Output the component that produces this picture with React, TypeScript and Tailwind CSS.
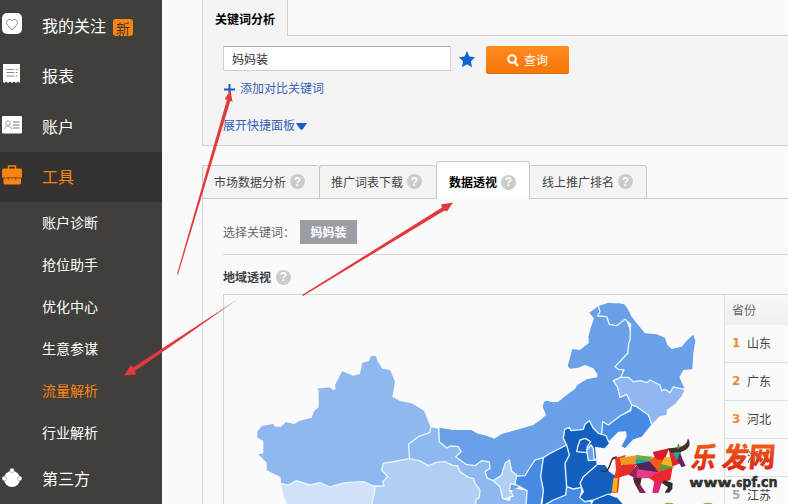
import type { ReactNode } from "react";

const INK = "#404040";

const mainMenu: { label: string; icon: ReactNode; badge?: string; active?: boolean }[] = [
  { label: "我的关注", icon: <HeartIcon />, badge: "新" },
  { label: "报表", icon: <ReportIcon /> },
  { label: "账户", icon: <AccountIcon /> },
  { label: "工具", icon: <ToolIcon />, active: true },
];

const subMenu = ["账户诊断", "抢位助手", "优化中心", "生意参谋", "流量解析", "行业解析"];

const tabs = [
  { label: "市场数据分析", width: "w-[117px]" },
  { label: "推广词表下载", width: "w-[117px]" },
  { label: "数据透视", width: "w-[94px]", active: true },
  { label: "线上推广排名", width: "w-[117px]" },
];

const ranks = ["山东", "广东", "河北", "浙江", "江苏"];

// 省份轮廓
const provinces = [
  {
    name: "内蒙古",
    fill: "#6a9fea",
    d: "M658 413L700 420 755 420 770 430 800 437 823 446 845 432 870 425 940 405 965 387 978 375 968 350 972 335 980 332 1000 337 1015 335 1040 315 1065 297 1072 285 1100 268 1132 262 1132 252 1120 235 1095 225 1075 233 1050 236 1043 228 1057 177 1080 180 1107 158 1105 140 1112 115 1122 85 1108 68 1135 48 1200 40 1240 150 1240 350 1200 378 1165 405 1150 430 1100 480 980 510 915 580 880 600 840 600 790 600 700 520 658 455Z",
  },
  {
    name: "黑龙江",
    fill: "#6a9fea",
    d: "M1135 48L1165 38 1212 42 1222 55 1235 80 1260 112 1275 130 1310 133 1335 143 1342 165 1355 177 1385 170 1405 147 1420 134 1426 152 1420 190 1417 238 1390 240 1378 262 1393 295 1382 300 1360 291 1350 308 1335 298 1325 302 1320 285 1290 270 1280 278 1262 272 1240 275 1225 262 1202 262 1212 240 1195 238 1185 230 1223 190 1226 160 1230 150 1232 102 1215 88 1190 107 1168 103 1160 80 1133 78 1140 65Z",
  },
  {
    name: "吉林",
    fill: "#90b7f1",
    d: "M1180 272L1202 262 1225 262 1240 275 1262 272 1280 278 1290 270 1320 285 1325 302 1335 298 1350 308 1360 291 1393 300 1385 318 1365 342 1340 360 1340 375 1320 378 1295 403 1285 375 1250 350 1235 345 1220 313 1200 322 1193 292Z",
  },
  {
    name: "辽宁",
    fill: "#478ae6",
    d: "M1235 345L1250 350 1285 375 1295 403 1265 440 1240 448 1215 475 1205 468 1220 440 1218 424 1195 425 1165 455 1145 430 1148 395 1165 405 1200 378 1232 362Z",
  },
  {
    name: "新疆",
    fill: "#8fb7f0",
    d: "M112 425L125 408 160 402 165 410 183 410 197 396 222 402 240 392 275 383 283 362 296 352 296 300 290 296 328 292 340 300 347 298 345 286 366 244 400 257 420 252 427 218 447 213 453 198 468 198 472 212 487 236 510 240 525 275 517 320 540 333 575 340 612 362 632 412 630 427 595 440 566 462 568 506 490 520 485 540 503 560 488 575 492 588 462 588 430 575 375 578 330 591 300 578 270 585 230 572 205 585 183 581 182 562 140 540 140 518 115 493 130 490 130 452 112 443Z",
  },
  {
    name: "西藏",
    fill: "#d0e1f9",
    d: "M183 583L205 585 230 572 270 585 300 578 330 591 375 578 430 575 465 592 462 615 453 650 203 650 190 615Z",
  },
  {
    name: "青海",
    fill: "#b1cef5",
    d: "M568 506L598 512 625 527 650 517 675 515 700 527 712 527 720 545 745 562 760 565 765 580 780 600 778 622 768 630 766 650 453 650 465 592 492 588 488 575 503 560 485 540 490 520 530 515Z",
  },
  {
    name: "甘肃",
    fill: "#8fb7f0",
    d: "M632 412L656 416 658 455 680 474 690 468 715 470 723 485 707 500 738 523 765 527 785 512 808 516 810 535 795 545 802 565 820 572 840 590 848 625 870 632 880 595 921 602 918 650 766 650 768 630 778 622 780 600 765 580 760 565 745 562 720 545 712 527 700 527 675 515 650 517 625 527 598 512 568 506 566 462 595 440 630 427Z",
  },
  {
    name: "宁夏",
    fill: "#b1cef5",
    d: "M820 572L845 555 855 520 868 510 875 543 890 555 885 585 872 580 868 600 880 618 850 628 845 600Z",
  },
  {
    name: "陕西",
    fill: "#478ae6",
    d: "M890 558L915 557 925 540 945 510 970 503 962 560 970 600 960 650 918 650 921 602 885 582Z",
  },
  {
    name: "山西",
    fill: "#155fbf",
    d: "M970 503L990 490 1040 465 1048 495 1035 520 1040 592 1037 615 1000 630 965 650 970 600 962 560Z",
  },
  {
    name: "河北",
    fill: "#155fbf",
    d: "M1040 465L1030 445 1034 418 1048 412 1053 422 1090 418 1095 403 1108 392 1120 415 1135 430 1158 437 1168 460 1153 475 1125 470 1130 525 1090 560 1080 580 1085 592 1060 597 1040 590 1035 520 1048 495Z",
  },
  { name: "北京", fill: "#155fbf", d: "M1080 450L1096 445 1112 455 1102 470 1100 488 1070 485 1073 470Z" },
  { name: "天津", fill: "#6a9fea", d: "M1100 480L1113 465 1120 475 1122 505 1128 510 1105 512Z" },
  {
    name: "河南",
    fill: "#478ae6",
    d: "M965 650L1000 630 1037 615 1040 590 1060 597 1085 592 1080 620 1110 635 1125 650Z",
  },
  {
    name: "山东",
    fill: "#155fbf",
    d: "M1090 560L1130 525 1155 525 1168 545 1190 560 1185 600 1165 615 1135 630 1120 630 1095 635 1078 622 1090 605 1080 580Z",
  },
  { name: "江苏", fill: "#155fbf", d: "M1110 650L1120 630 1165 612 1190 622 1215 650Z" },
];

function HeartIcon() {
  return (
    <svg width="20" height="22" viewBox="0 0 20 22">
      <rect width="20" height="21" rx="5" fill="#fff" />
      <path d="M10 17L5.700 12.300C2.500 8.500 7 4 10 7.800 13 4 17.500 8.500 14.300 12.300Z" fill="none" stroke="#777" strokeWidth=".9" />
    </svg>
  );
}

function ReportIcon() {
  return (
    <svg width="20" height="20" viewBox="0 0 20 20">
      <path d="M1 0H18V19L16 17.500 14 19 12 17.500 10 19 8 17.500 6 19 4 17.500 2.500 19 1 18Z" fill="#fff" />
      <path d="M4.500 5.500H12M4.500 8.500H12M4.500 12H12M13.500 5.500H15.500M13.500 8.500H15.500M13.500 12H15.500" stroke="#888" />
    </svg>
  );
}

function AccountIcon() {
  return (
    <svg width="20" height="18" viewBox="0 0 20 18">
      <rect width="20" height="17.500" rx="1" fill="#fff" />
      <circle cx="6" cy="7" r="2.300" fill="none" stroke="#888" strokeWidth=".8" />
      <path d="M2.500 13.500C3 10.500 4.500 10 6 10S9 10.500 9.500 13.500" fill="none" stroke="#888" strokeWidth=".8" />
      <path d="M11 6H17.500M11 9H17.500M11 12H17.500" stroke="#777" />
    </svg>
  );
}

function ToolIcon() {
  return (
    <svg width="20" height="20" viewBox="0 0 20 20">
      <path d="M6.500 4V1H13.500V4" fill="none" stroke="#fb8413" strokeWidth="1.300" />
      <path d="M1.500 3.500H18.500Q20 3.500 20 5V12.500H0V5Q0 3.500 1.500 3.500Z" fill="#fb8413" />
      <path d="M1.500 12.500H19V18Q19 19.500 17.500 19.500H3Q1.500 19.500 1.500 18Z" fill="#fb8413" />
      <path d="M1 13H19.500M6.700 12V15M13.700 12V15" stroke="#7a4a1e" strokeWidth=".8" />
    </svg>
  );
}

function ThirdIcon() {
  return (
    <svg width="20" height="20" viewBox="0 0 20 20">
      <circle cx="10" cy="11" r="8" fill="#fff" />
      <g fill="#fff" stroke="#999" strokeWidth=".6">
        <circle cx="10" cy="2.500" r="2.200" />
        <circle cx="2.300" cy="10.500" r="2.200" />
        <circle cx="17.700" cy="10.500" r="2.200" />
      </g>
    </svg>
  );
}

function Help() {
  return (
    <span className="flex h-[15px] w-[15px] shrink-0 items-center justify-center rounded-full bg-[#cbcbcb] font-['Liberation_Sans'] text-xs font-bold text-white">
      ?
    </span>
  );
}

function Sidebar() {
  return (
    <aside className="flex w-[162px] shrink-0 flex-col bg-[#403f3c] text-base text-white">
      <div className="h-[1px]" />
      {mainMenu.map((m) => (
        <div
          key={m.label}
          className={
            m.active
              ? "flex h-[50px] shrink-0 items-center bg-[#33322f] pb-[2px] pl-[2px] text-[#fb8413]"
              : "flex h-[50.300px] shrink-0 items-center pb-[2px] pl-[2px]"
          }
        >
          <span className="flex w-10 -translate-y-[1px]">{m.icon}</span>
          <span>{m.label}</span>
          {m.badge && (
            <span className="mt-[5px] ml-[7px] flex h-[17px] w-5 items-center justify-center rounded-[3px] bg-[#fb8413] text-sm text-[#40362a]">
              {m.badge}
            </span>
          )}
        </div>
      ))}
      {subMenu.map((s) => (
        <div
          key={s}
          className={
            s === "流量解析"
              ? "flex h-[42px] shrink-0 items-center pb-[2px] pl-[42px] text-sm text-[#fb8413]"
              : "flex h-[42px] shrink-0 items-center pb-[2px] pl-[42px] text-sm"
          }
        >
          {s}
        </div>
      ))}
      <div className="flex h-[50px] shrink-0 items-center pb-[2px] pl-[2px]">
        <span className="flex w-10">
          <ThirdIcon />
        </span>
        <span>第三方</span>
      </div>
    </aside>
  );
}

function SearchPanel() {
  return (
    <section className="flex h-[146px] flex-col border-b border-l border-[#d3d3d3] bg-[#f4f4f4]">
      <div className="flex h-9 shrink-0">
        <div className="w-[85px] border-r border-[#d0d0d0] pt-[10px] pl-3 text-xs leading-[18px] font-bold text-black">
          关键词分析
        </div>
        <div className="flex-1 border-b border-[#d0d0d0] bg-[#fafafa]" />
      </div>
      <div className="mt-[10px] flex h-7 pl-5">
        <div className="flex h-[25px] w-[228px] items-center border border-[#d0d0d0] border-t-[#aaa] bg-white pl-2 text-xs text-[#333]">
          妈妈装
        </div>
        <svg className="mt-[5px] ml-2" width="16" height="17" viewBox="0 0 16 17">
          <path d="M8 0L10.400 5.500 16 6.200 11.900 10.200 13 16.300 8 13.300 3 16.300 4.100 10.200 0 6.200 5.600 5.500Z" fill="#0b63d8" />
        </svg>
        <div className="ml-[11px] flex h-7 w-[83px] items-center rounded-[2px] border-b border-[#dc6f10] bg-linear-to-b from-[#ff8b20] to-[#f87503] pl-[21px] text-xs text-white">
          <svg className="mt-[2px] mr-[5px]" width="12" height="13" viewBox="0 0 12 13">
            <circle cx="5" cy="5" r="3.800" fill="none" stroke="#fff" strokeWidth="2" />
            <path d="M7.500 8L11 12" stroke="#fff" strokeWidth="2.400" />
          </svg>
          查询
        </div>
      </div>
      <div className="mt-[5px] flex h-[18px] items-center pl-[21px] text-xs text-[#3462b8]">
        <svg className="mt-[2px] mr-[5px]" width="11" height="11" viewBox="0 0 11 11">
          <path d="M5.500 0V11M0 5.500H11" stroke="#1c5cc4" strokeWidth="2" />
        </svg>
        添加对比关键词
      </div>
      <div className="mt-[19px] flex h-[18px] items-center pl-5 text-xs text-[#3462b8]">
        展开快捷面板
        <svg className="mt-[2px] ml-[1px]" width="11" height="7" viewBox="0 0 11 7">
          <path d="M0 0H11L7 6Q5.500 7.500 4 6Z" fill="#1c5cc4" />
        </svg>
      </div>
    </section>
  );
}

function TabBar() {
  return (
    <div className="mt-[15px] flex h-[38px] items-end text-xs">
      {tabs.map((t, i) => (
        <div
          key={t.label}
          className={
            t.active
              ? `${t.width} flex h-[38px] shrink-0 items-center gap-1 rounded-t-[3px] border border-b-0 border-[#c8c8c8] bg-white pt-[3px] pl-3 font-bold text-black`
              : `${t.width} flex h-[34px] shrink-0 items-center gap-1 rounded-t-[3px] border border-[#c8c8c8] bg-[#f4f4f4] pb-[1px] text-[#444] ${i < 3 ? "border-r-0 pl-[11px]" : "border-l-0 pl-3"}`
          }
        >
          {t.label}
          <Help />
        </div>
      ))}
      <div className="h-px flex-1 bg-[#c8c8c8]" />
    </div>
  );
}

function ChinaMap() {
  return (
    <svg className="shrink-0" width="500" height="209" viewBox="12 15 1500 627">
      {provinces.map((p) => (
        <path key={p.name} d={p.d} fill={p.fill} />
      ))}
      <g fill="none" stroke="#e4f8ff" strokeWidth="4" strokeLinejoin="round">
        <path d="M1135 48L1140 65 1133 78 1160 80 1168 103 1190 107 1215 88 1232 102 1230 150 1226 160 1223 190 1185 230 1195 238 1212 240 1202 262 1180 272 1193 292 1200 322 1220 313 1235 345 1232 362 1200 378 1165 405 1148 395 1145 432" />
        <path d="M1202 262L1225 262 1240 275 1262 272 1280 278 1290 270 1320 285 1325 302 1335 298 1350 308 1360 291 1393 298M1235 345L1250 350 1285 375 1295 403" />
        <path d="M632 412L630 427 595 440 566 462 568 506 490 520 485 540 503 560 488 575 492 588 462 588 430 575 375 578 330 591 300 578 270 585 230 572 205 585 183 581M465 592L462 615 453 650" />
        <path d="M568 506L598 512 625 527 650 517 675 515 700 527 712 527 720 545 745 562 760 565 765 580 780 600 778 622 768 630 766 650" />
        <path d="M656 416L658 455 680 474 690 468 715 470 723 485 707 500 738 523 765 527 785 512 808 516 810 535 795 545 802 565 820 572 840 590 848 625 870 632M820 572L845 555 855 520 868 510 875 543 890 555 885 585 872 580 868 600 880 618 850 628M885 582L921 602 918 650" />
        <path d="M890 558L915 557 925 540 945 510 970 503 990 490 1040 465M970 503L962 560 970 600 965 650M1040 465L1048 495 1035 520 1040 590 1037 615 1000 630 965 650" />
        <path d="M1040 465L1030 445 1034 418 1048 412 1053 422 1090 418 1095 403 1108 392 1120 415 1135 430 1158 437 1168 460" />
        <path d="M1080 450L1096 445 1112 455 1102 470 1100 488 1070 485 1073 470ZM1100 480L1113 465 1120 475 1122 505 1128 510 1105 512Z" />
        <path d="M1130 525L1090 560 1080 580 1090 605 1078 622 1095 635 1120 630 1165 612 1190 622M1040 590L1060 597 1085 592M1120 630L1110 650" />
      </g>
    </svg>
  );
}

function RankTable() {
  return (
    <div className="w-16 shrink-0 border-l border-[#ddd] text-xs text-[#444]">
      <div className="flex h-[30px] items-center bg-linear-to-b from-[#f9f9f9] to-[#efefef] pb-[1px] pl-[7px] text-[#666]">省份</div>
      {ranks.map((r, i) => (
        <div key={r} className="flex h-[38px] items-center border-b border-[#ddd] pb-[1px] pl-[7px]">
          <b className={i < 3 ? "w-[15px] font-['DejaVu_Sans'] text-[#ef8935]" : "w-[15px] font-['DejaVu_Sans'] text-[#aaa]"}>
            {i + 1}
          </b>
          {r}
        </div>
      ))}
    </div>
  );
}

function Arrows() {
  return (
    <svg className="absolute top-0 left-0" width="788" height="504" viewBox="0 0 788 504" fill="#e4393c">
      <path d="M177 274L227 99.500 224.500 99.500 230.500 90 232.500 102 230.300 101 178 274.500Z" />
      <path d="M302 295L442 207.500 441 204.500 453 202.500 447 211.500 444.500 210.500 303 296Z" />
      <path d="M238 299L133 367.500 131 365 124 375.500 136 374.500 135 371 187 335Z" />
    </svg>
  );
}

// 右下角水印
function Watermark() {
  return (
    <svg className="absolute right-0 bottom-0" width="188" height="74" viewBox="0 0 564 222">
      <defs>
        <linearGradient id="fire" x1="0" y1="0" x2="0" y2="1">
          <stop offset="0" stopColor="#f37316" />
          <stop offset="1" stopColor="#df1715" />
        </linearGradient>
      </defs>
      <path d="M52 80C25 73 35 118 12 123L1 117Q7 133 22 123C38 108 30 83 50 87Z" fill="#352b26" />
      <path d="M45 84L78 75 63 103 54 188H34L40 150 48 120Z" fill="#ed3825" />
      <path d="M40 145L54 143 50 186H36Z" fill="#f3b51d" />
      <path d="M58 84L119 74 109 104 65 105Z" fill="#ef9b21" />
      <path d="M62 105L110 102 92 132 54 143Z" fill="#e52d27" />
      <path d="M110 76L159 80 146 92H108Z" fill="#76aa3e" />
      <path d="M106 88L168 93 154 104 108 103Z" fill="#15a5b8" />
      <path d="M108 102L152 94 178 128 119 121Z" fill="#522357" />
      <path d="M86 134L110 106 134 140 105 145Z" fill="#9c205f" />
      <path d="M112 118L178 127 150 145H109Z" fill="#e43c87" />
      <path d="M146 91L186 67 195 94 178 128Z" fill="#ef5b1c" />
      <path d="M158 66L208 55 193 90 167 88Z" fill="#d91c2c" />
      <path d="M206 55L237 58 245 98 215 110Z" fill="#e7262b" />
      <path d="M193 83L211 80 218 112 183 103Z" fill="#f4b922" />
      <path d="M183 102L222 111 178 130Z" fill="#5b9e3d" />
      <path d="M174 127L218 112 211 150 185 158 176 188H157L163 155 147 143Z" fill="#ed2630" />
      <path d="M165 156L182 157 174 188H158Z" fill="#db2383" />
      <path d="M99 143H125L121 164 137 188H119L103 159Z" fill="#4c2634" />
      <path d="M112 160L125 174 137 188H120Z" fill="#9a1d58" />
      <path d="M194 151L218 159 217 177 207 188H194L204 172 185 158Z" fill="#342b2b" />
      <path d="M217 65L241 60 246 86 232 93Z" fill="#23a5a2" />
      <path d="M239 70L257 108 245 112 232 91Z" fill="#6a2455" />
      <path d="M203 56L237 51Q261 47 264 25Q280 55 242 66L213 68Z" fill="#453124" />
      <path d="M231 57Q231 46 237 39L239 55Z" fill="#67913b" />
      <g fontFamily="'Noto Sans CJK SC', sans-serif" fontWeight="900" fontSize="80" fill="url(#fire)">
        <text transform="translate(270 114) skewX(-10) scale(.93 1.080)">乐</text>
        <text transform="translate(362 114) skewX(-10) scale(.98 1.080)">发</text>
        <text transform="translate(444 112) skewX(-5) scale(1 1.050)">网</text>
      </g>
      <g fontFamily="'DejaVu Sans', sans-serif" fontWeight="bold" fill="#30302e" stroke="#30302e" strokeWidth="1.500">
        <text x="268" y="172" fontSize="37" textLength="141" lengthAdjust="spacingAndGlyphs">www.</text>
        <text x="409" y="172" fontSize="26">6</text>
        <text x="427" y="172" fontSize="40" textLength="106" lengthAdjust="spacingAndGlyphs">pf.cn</text>
      </g>
      <ellipse cx="207" cy="223" rx="14" ry="5" fill="#9dac55" />
      <ellipse cx="324" cy="223" rx="14" ry="5" fill="#9dac55" />
    </svg>
  );
}

export default function App() {
  return (
    <div
      className="relative flex h-[504px] w-[788px] overflow-hidden bg-[#fafafa] font-['Noto_Sans_CJK_SC',sans-serif] whitespace-nowrap"
      style={{ color: INK }}
    >
      <Sidebar />
      <main className="flex min-w-0 flex-1 flex-col pl-10">
        <SearchPanel />
        <TabBar />
        <section className="flex flex-1 flex-col border-l border-[#d6d6d6] pl-5">
          <div className="flex h-14 shrink-0 items-center border-b border-[#d6d6d6] pt-[10px] text-xs text-[#666]">
            选择关键词：
            <span className="ml-[5px] flex h-6 w-[57px] items-center justify-center bg-[#9c9da5] font-bold text-white">妈妈装</span>
          </div>
          <div className="flex h-[39px] shrink-0 items-center gap-[5px] pt-[5px] text-xs font-bold">
            地域透视
            <Help />
          </div>
          <div className="flex h-[210px] shrink-0 overflow-hidden border-t border-l border-[#d6d6d6]">
            <ChinaMap />
            <RankTable />
          </div>
        </section>
      </main>
      <Arrows />
      <Watermark />
    </div>
  );
}
